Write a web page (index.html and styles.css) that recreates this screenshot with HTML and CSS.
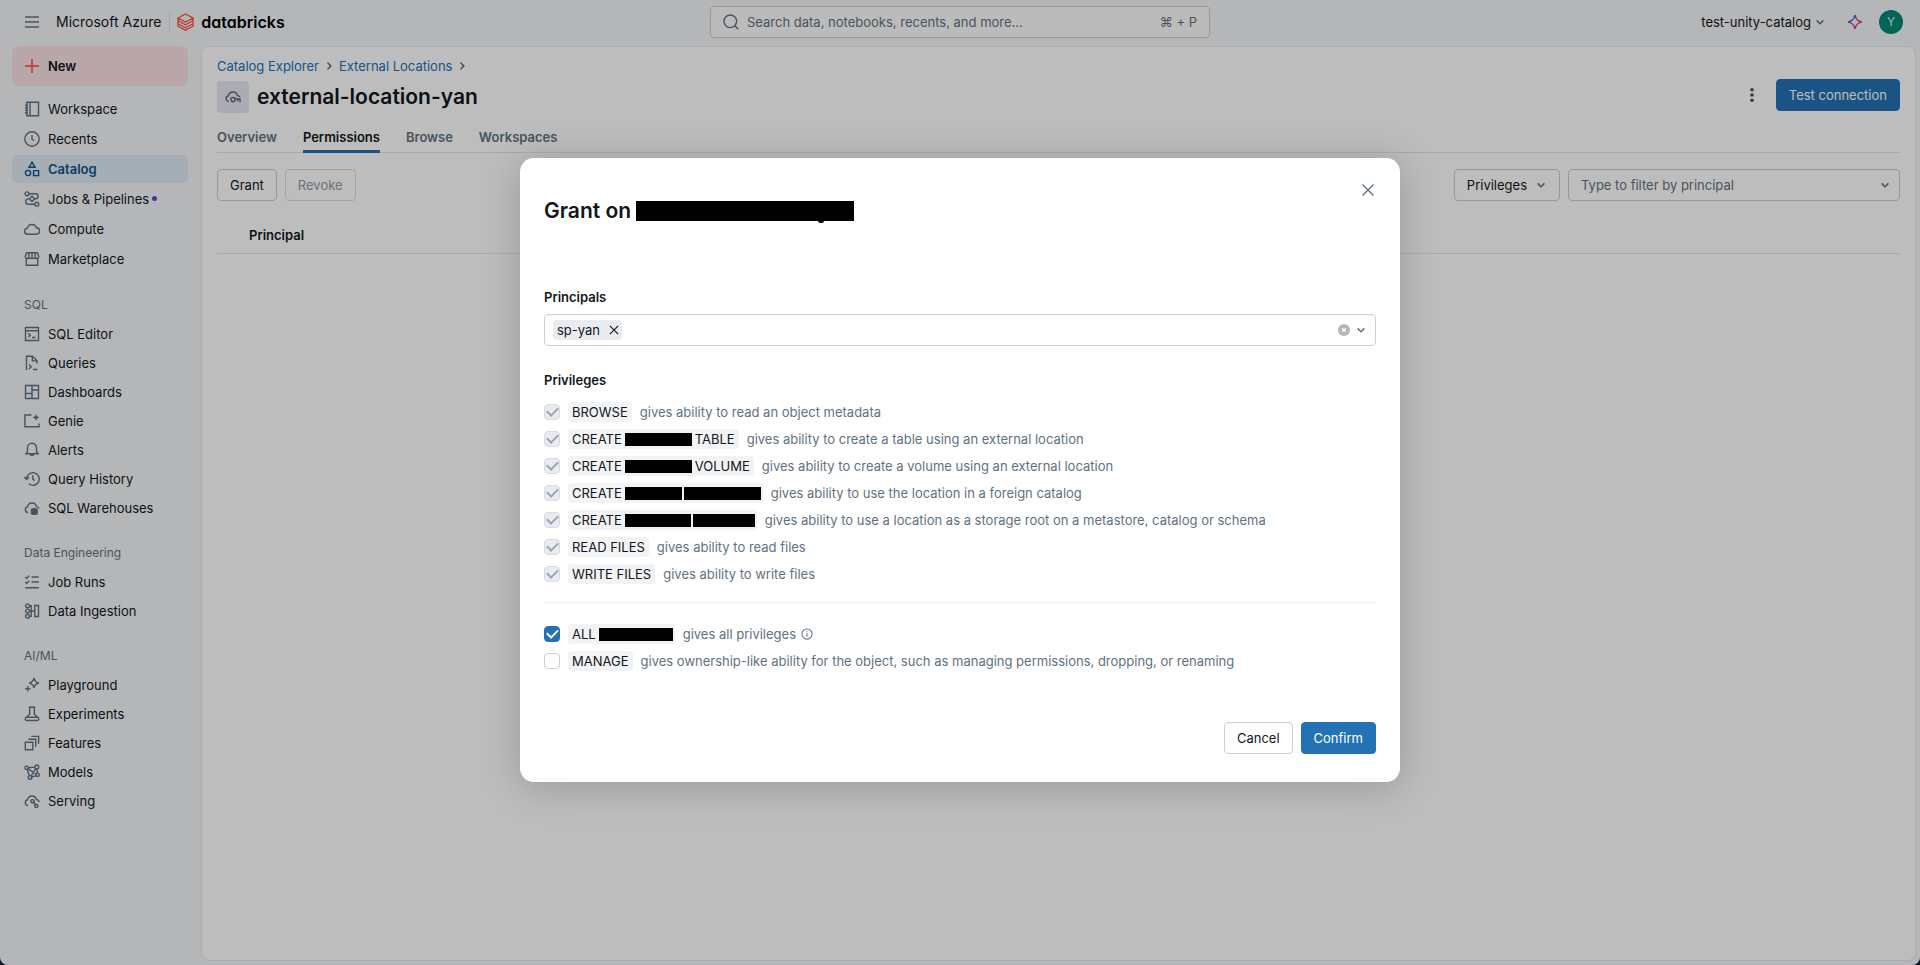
FILE: index.html
```html
<!DOCTYPE html>
<html lang="en">
<head>
<meta charset="utf-8">
<title>external-location-yan - Databricks</title>
<link rel="stylesheet" href="styles.css">
</head>
<body>
<svg class="defs" aria-hidden="true">
  <symbol id="i-menu" viewBox="0 0 16 16"><path d="M1 3h14M1 8h14M1 13h14"/></symbol>
  <symbol id="i-plus" viewBox="0 0 16 16"><path d="M8 1v14M1 8h14"/></symbol>
  <symbol id="i-workspace" viewBox="0 0 16 16"><path d="M2.8 1.3h11.7v13.4H2.8zM6 1.3v13.4M1 4.2h3M1 6.7h3M1 9.3h3M1 11.8h3"/></symbol>
  <symbol id="i-clock" viewBox="0 0 16 16"><circle cx="8" cy="8" r="7.2"/><path d="M8 4v4.3l2 1.2"/></symbol>
  <symbol id="i-catalog" viewBox="0 0 16 16"><path d="M8 1.2l3 5H5zM9.6 9.6h5v5h-5z"/><circle cx="4" cy="12" r="2.6"/></symbol>
  <symbol id="i-jobs" viewBox="0 0 16 16"><circle cx="3" cy="2.8" r="1.9"/><circle cx="12.8" cy="13.2" r="1.9"/><path d="M5 2.8h6.600a2.500 2.500 0 0 1 0 5H10.500M11 13.200H4.300a2.600 2.600 0 0 1 0-5.300H5.500M8 5.200l2.700 2.700L8 10.600 5.300 7.900z"/></symbol>
  <symbol id="i-cloud" viewBox="0 0 16 16"><path d="M3.800 13.200a3 3 0 0 1-.4-6 4.700 4.700 0 0 1 9.100-.4 3.200 3.200 0 0 1-.2 6.400z"/></symbol>
  <symbol id="i-market" viewBox="0 0 16 16"><path d="M2.500 1.800h11l1.200 3.700c0 2.700-3.500 2.700-3.500.3 0 2.400-3.200 2.400-3.200 0 0 2.400-3.200 2.400-3.200 0 0 2.400-3.500 2.400-3.500-.3zM5.200 1.800l-.4 4M8 1.800v4M10.800 1.800l.4 4M2.300 7.800v6.500h11.400V7.800"/></symbol>
  <symbol id="i-editor" viewBox="0 0 16 16"><path d="M1.500 1.500h13v13h-13zM1.500 4.700h13M4.300 7.300l2 1.900-2 1.900M8 11.500h3.500"/></symbol>
  <symbol id="i-queries" viewBox="0 0 16 16"><path d="M2.500 15V1.200h6l4.500 4.500v3M8.300 1.200v4.700H13M5 9.500l2.300 2.300L5 14.100M9 14.500h4.500"/></symbol>
  <symbol id="i-dash" viewBox="0 0 16 16"><path d="M1.500 1.500h13v13h-13zM8 1.500v13M1.500 9.500H8M8 6h6.500"/></symbol>
  <symbol id="i-genie" viewBox="0 0 16 16"><path d="M7.500 2H.9v11.800h14.200v-3.300"/><path class="solid" d="M12 .8c.4 2.200 1.200 3 3.500 3.600-2.300.6-3.100 1.400-3.500 3.600-.4-2.200-1.200-3-3.500-3.600C10.800 3.800 11.600 3 12 .8z"/></symbol>
  <symbol id="i-bell" viewBox="0 0 16 16"><path d="M3.500 9.500V5.700a4.500 4.500 0 0 1 9 0v3.800l1.600 2.300H1.900zM6.200 12.200a1.900 1.900 0 0 0 3.600 0"/></symbol>
  <symbol id="i-history" viewBox="0 0 16 16"><path d="M2.600 8a6.300 6.300 0 1 1 2.200 4.800M.3 6l2.300 2.400L5 6M8.800 4.300v4l2 1.200"/></symbol>
  <symbol id="i-warehouse" viewBox="0 0 16 16"><path d="M4 12.500a2.900 2.900 0 0 1-.5-5.700 4.600 4.600 0 0 1 9-.2 2.600 2.600 0 0 1 2.500 2"/><path class="solid" d="M6.800 9.600c0-2 7-2 7 0v4c0 2-7 2-7 0z"/></symbol>
  <symbol id="i-runs" viewBox="0 0 16 16"><path d="M1.200 3l1.500 1.400L5.200 1.600M1.200 8l1.500 1.400 2.500-2.800M7.500 3h7.300M7.500 8h7.300M1.200 13.800h13.600"/></symbol>
  <symbol id="i-ingest" viewBox="0 0 16 16"><circle cx="3.500" cy="2.800" r="1.900"/><circle cx="3.500" cy="8" r="1.900"/><circle cx="3.500" cy="13.200" r="1.900"/><path d="M5.400 2.800h1.800v10.400H5.400M5.400 8h5.400M10.800 2.500h3.700v11h-3.700z"/></symbol>
  <symbol id="i-play" viewBox="0 0 16 16"><path d="M10 1.200c.6 3 1.600 4 4.800 4.800-3.200.8-4.200 1.800-4.800 4.800C9.400 7.800 8.400 6.800 5.200 6 8.400 5.200 9.400 4.200 10 1.200zM3.800 9v5.400M1.100 11.700h5.400"/></symbol>
  <symbol id="i-flask" viewBox="0 0 16 16"><path d="M4.800 1.300h6.400M5.700 1.300v7l-4 3.500c-1 1.100-.4 2.700.9 2.700h10.800c1.300 0 1.900-1.600.9-2.700l-4-3.500v-7M2.600 11.300h10.800"/></symbol>
  <symbol id="i-features" viewBox="0 0 16 16"><path d="M1.300 7.200h7.500v7.500H1.300zM4.300 4.300h7.400v7.400M7.300 1.400h7.300v7.300"/></symbol>
  <symbol id="i-models" viewBox="0 0 16 16"><circle cx="2.600" cy="3.800" r="1.700"/><circle cx="12.800" cy="2.900" r="1.900"/><circle cx="13.600" cy="10.800" r="1.700"/><circle cx="6" cy="13.400" r="1.800"/><path d="M4.300 3.700l6.600-.6M3.200 5.400l2.200 6.300M11.800 4.500l-4.600 7.400M12.900 4.800l.5 4.300M4 4.800l8 5.200M7.800 13l4.300-1.400"/></symbol>
  <symbol id="i-serving" viewBox="0 0 16 16"><path d="M4 12.500a2.900 2.900 0 0 1-.5-5.700 4.600 4.600 0 0 1 9-.2 2.700 2.700 0 0 1 2.600 2.400M9 8.500l3.500 4"/><circle cx="8.500" cy="8.300" r="1.700"/><circle cx="12.300" cy="13" r="1.600"/></symbol>
  <symbol id="i-cloudkey" viewBox="0 0 16 16"><path d="M3.700 12.500a2.900 2.900 0 0 1-.3-5.700 4.600 4.600 0 0 1 9-.2A2.800 2.800 0 0 1 15 8"/><circle cx="8" cy="10.600" r="2.100"/><path d="M10.100 10h5v3.200M12.800 10v2.600"/></symbol>
  <symbol id="i-search" viewBox="0 0 16 16"><circle cx="7.300" cy="7.300" r="6.300"/><path d="M11.800 11.800l3.500 3.500"/></symbol>
  <symbol id="i-down" viewBox="0 0 16 16"><path d="M3.500 5.800L8 10.300l4.500-4.500"/></symbol>
  <symbol id="i-right" viewBox="0 0 16 16"><path d="M6 3.500L10.500 8 6 12.500"/></symbol>
  <symbol id="i-close" viewBox="0 0 16 16"><path d="M2.500 2.500l11 11M13.500 2.500l-11 11"/></symbol>
  <symbol id="i-info" viewBox="0 0 16 16"><circle cx="8" cy="8" r="6.800"/><path d="M8 7v4.500M8 4.300v1.500"/></symbol>
</svg>

<div class="window">
  <header class="topbar">
    <div class="brand">
      <button class="bare" aria-label="Toggle navigation"><svg class="icon"><use href="#i-menu"/></svg></button>
      <span class="cloud-name">Microsoft Azure</span>
      <a class="logo" href="#">
        <svg class="logo-mark" viewBox="0 0 17 18"><path d="M1 5l7.500-4L16 5 8.500 9zM1 5v2.700l7.500 4L16 7.700V5M1 7.700v3l7.500 4 7.500-4v-3M1 10.700v2.500l7.500 4 7.500-4v-2.500"/></svg>
        <span>databricks</span>
      </a>
    </div>
    <div class="search">
      <svg class="icon"><use href="#i-search"/></svg>
      <input type="text" aria-label="Search" placeholder="Search data, notebooks, recents, and more...">
      <span>⌘ + P</span>
    </div>
    <div class="account">
      <button class="bare metastore">test-unity-catalog<svg class="icon chevron"><use href="#i-down"/></svg></button>
      <button class="bare" aria-label="Assistant">
        <svg class="assistant" viewBox="0 0 16 16">
          <defs><linearGradient id="spark" x1="0" y1="0" x2="1" y2="1"><stop offset=".2" stop-color="#4a5fe8"/><stop offset=".5" stop-color="#b455c0"/><stop offset=".8" stop-color="#ff3b45"/></linearGradient></defs>
          <path stroke="url(#spark)" d="M8 1.200c1 4.300 2.500 5.800 6.800 6.800C10.500 9 9 10.500 8 14.800 7 10.500 5.500 9 1.200 8 5.500 7 7 5.500 8 1.200z"/>
        </svg>
      </button>
      <button class="avatar" aria-label="Account">Y</button>
    </div>
  </header>

  <div class="body">
    <nav class="sidebar" aria-label="Main">
      <button class="new"><svg class="icon"><use href="#i-plus"/></svg>New</button>
      <div class="nav-main">
        <a href="#"><svg class="icon"><use href="#i-workspace"/></svg>Workspace</a>
        <a href="#"><svg class="icon"><use href="#i-clock"/></svg>Recents</a>
        <a href="#" class="active" aria-current="page"><svg class="icon"><use href="#i-catalog"/></svg>Catalog</a>
        <a href="#"><svg class="icon"><use href="#i-jobs"/></svg>Jobs &amp; Pipelines<i class="dot"></i></a>
        <a href="#"><svg class="icon"><use href="#i-cloud"/></svg>Compute</a>
        <a href="#"><svg class="icon"><use href="#i-market"/></svg>Marketplace</a>
      </div>
      <section class="nav-group">
        <h2>SQL</h2>
        <a href="#"><svg class="icon"><use href="#i-editor"/></svg>SQL Editor</a>
        <a href="#"><svg class="icon"><use href="#i-queries"/></svg>Queries</a>
        <a href="#"><svg class="icon"><use href="#i-dash"/></svg>Dashboards</a>
        <a href="#"><svg class="icon"><use href="#i-genie"/></svg>Genie</a>
        <a href="#"><svg class="icon"><use href="#i-bell"/></svg>Alerts</a>
        <a href="#"><svg class="icon"><use href="#i-history"/></svg>Query History</a>
        <a href="#"><svg class="icon"><use href="#i-warehouse"/></svg>SQL Warehouses</a>
      </section>
      <section class="nav-group">
        <h2>Data Engineering</h2>
        <a href="#"><svg class="icon"><use href="#i-runs"/></svg>Job Runs</a>
        <a href="#"><svg class="icon"><use href="#i-ingest"/></svg>Data Ingestion</a>
      </section>
      <section class="nav-group">
        <h2>AI/ML</h2>
        <a href="#"><svg class="icon"><use href="#i-play"/></svg>Playground</a>
        <a href="#"><svg class="icon"><use href="#i-flask"/></svg>Experiments</a>
        <a href="#"><svg class="icon"><use href="#i-features"/></svg>Features</a>
        <a href="#"><svg class="icon"><use href="#i-models"/></svg>Models</a>
        <a href="#"><svg class="icon"><use href="#i-serving"/></svg>Serving</a>
      </section>
    </nav>

    <main class="panel">
      <div class="crumbs">
        <a href="#">Catalog Explorer</a><svg class="icon small"><use href="#i-right"/></svg>
        <a href="#">External Locations</a><svg class="icon small"><use href="#i-right"/></svg>
      </div>
      <div class="heading">
        <div class="heading-title">
          <span class="heading-icon"><svg class="icon"><use href="#i-cloudkey"/></svg></span>
          <h1>external-location-yan</h1>
        </div>
        <div class="heading-actions">
          <button class="bare more" aria-label="More actions"><svg viewBox="0 0 16 16"><circle cx="8" cy="2.700" r="1.800"/><circle cx="8" cy="8" r="1.800"/><circle cx="8" cy="13.300" r="1.800"/></svg></button>
          <button class="btn primary">Test connection</button>
        </div>
      </div>
      <div class="tabs" role="tablist">
        <button role="tab">Overview</button>
        <button role="tab" class="selected" aria-selected="true">Permissions</button>
        <button role="tab">Browse</button>
        <button role="tab">Workspaces</button>
      </div>
      <div class="toolbar">
        <button class="btn">Grant</button>
        <button class="btn" disabled>Revoke</button>
        <button class="btn menu">Privileges<svg class="icon chevron"><use href="#i-down"/></svg></button>
        <div class="combo filter">
          <input type="text" aria-label="Filter by principal" placeholder="Type to filter by principal">
          <svg class="icon chevron"><use href="#i-down"/></svg>
        </div>
      </div>
      <table class="grants"><thead><tr><th scope="col">Principal</th></tr></thead></table>
    </main>
  </div>

  <div class="overlay">
    <div class="modal" role="dialog" aria-modal="true" aria-labelledby="grant-title">
      <button class="bare close" aria-label="Close"><svg class="icon"><use href="#i-close"/></svg></button>
      <h2 id="grant-title">Grant on <span class="mask w-title"></span></h2>

      <label class="field-label" for="principals">Principals</label>
      <div class="combo principals">
        <span class="chip">sp-yan<button class="bare" aria-label="Remove sp-yan"><svg class="icon"><use href="#i-close"/></svg></button></span>
        <input type="text" id="principals">
        <button class="bare clear" aria-label="Clear"><svg viewBox="0 0 12 12"><circle cx="6" cy="6" r="6"/><path d="M4.200 4.200l3.600 3.600M7.800 4.200L4.200 7.800"/></svg></button>
        <svg class="icon chevron"><use href="#i-down"/></svg>
      </div>

      <h3 class="field-label">Privileges</h3>
      <div class="privileges">
        <label><input type="checkbox" checked disabled><span class="tag">BROWSE</span>gives ability to read an object metadata</label>
        <label><input type="checkbox" checked disabled><span class="tag">CREATE <span class="mask w-external"></span>TABLE</span>gives ability to create a table using an external location</label>
        <label><input type="checkbox" checked disabled><span class="tag">CREATE <span class="mask w-external"></span>VOLUME</span>gives ability to create a volume using an external location</label>
        <label><input type="checkbox" checked disabled><span class="tag ends-masked">CREATE <span class="mask w-foreign"></span><span class="mask w-securable"></span></span>gives ability to use the location in a foreign catalog</label>
        <label><input type="checkbox" checked disabled><span class="tag ends-masked">CREATE <span class="mask w-managed"></span><span class="mask w-storage"></span></span>gives ability to use a location as a storage root on a metastore, catalog or schema</label>
        <label><input type="checkbox" checked disabled><span class="tag">READ FILES</span>gives ability to read files</label>
        <label><input type="checkbox" checked disabled><span class="tag">WRITE FILES</span>gives ability to write files</label>
      </div>
      <div class="privileges broad">
        <label><input type="checkbox" checked><span class="tag ends-masked">ALL <span class="mask w-all"></span></span>gives all privileges<svg class="icon info"><use href="#i-info"/></svg></label>
        <label><input type="checkbox"><span class="tag">MANAGE</span>gives ownership-like ability for the object, such as managing permissions, dropping, or renaming</label>
      </div>

      <div class="actions">
        <button class="btn">Cancel</button>
        <button class="btn primary">Confirm</button>
      </div>
    </div>
  </div>
</div>
</body>
</html>
```

FILE: styles.css
```css
:root {
  --text: #11171c;
  --muted: #5f7281;
  --blue: #2272b4;
  --line: #e4e9ed;
  --control: #c6d0d5;
}

* { box-sizing: border-box; }

body {
  margin: 0;
  background: #101828;
  color: var(--text);
  font: 13px/20px Inter, "Liberation Sans", sans-serif;
}

button, input { font: inherit; color: inherit; }
h1, h2, h3 { margin: 0; }
a { color: inherit; text-decoration: none; }
input::placeholder { color: var(--muted); opacity: 1; }

.defs { display: none; }

.icon {
  width: 16px;
  height: 16px;
  flex: none;
  fill: none;
  stroke: currentColor;
  stroke-width: 1.4;
}
.icon.small { width: 12px; height: 12px; stroke-width: 1.7; }
.icon.chevron { width: 12px; height: 12px; stroke-width: 2; color: var(--muted); }
.solid { fill: currentColor; stroke: none; }

.bare {
  display: flex;
  align-items: center;
  padding: 0;
  border: 0;
  background: none;
}

.window {
  position: relative;
  display: flex;
  flex-direction: column;
  min-height: 100vh;
  overflow: hidden;
  border-radius: 0 0 8px 8px;
  background: #f3f6f9;
}

/* Top bar */
.topbar {
  display: grid;
  grid-template-columns: 1fr minmax(200px, 500px) 1fr;
  align-items: center;
  height: 46px;
  padding: 0 17px 2px;
}
.brand { display: flex; align-items: center; padding-left: 7px; }
.brand .icon { color: var(--muted); }
.cloud-name {
  margin-left: 16px;
  padding-right: 8px;
  border-right: 1px solid #dfe4e8;
  font-size: 14px;
}
.logo {
  display: flex;
  align-items: center;
  gap: 7px;
  margin-left: 7px;
  color: #000;
  font-size: 16px;
  font-weight: 600;
  font-feature-settings: "cv11";
}
.logo-mark { width: 17px; height: 18px; fill: none; stroke: #ff4b3e; stroke-width: 1.3; }
.search {
  display: flex;
  align-items: center;
  gap: 8px;
  height: 32px;
  padding: 0 12px;
  border: 1px solid var(--control);
  border-radius: 4px;
  background: #fcfdfd;
  color: var(--muted);
}
.search input, .combo input {
  flex: 1;
  min-width: 0;
  padding: 0;
  border: 0;
  outline: 0;
  background: none;
}
.account { display: flex; align-items: center; justify-content: flex-end; }
.metastore { gap: 3px; margin-right: 21px; }
.assistant { width: 16px; height: 16px; fill: none; stroke-width: 1.6; }
.avatar {
  width: 24px;
  height: 24px;
  margin-left: 16px;
  padding: 0;
  border: 0;
  border-radius: 50%;
  background: #008775;
  color: #e8f4f2;
  font-size: 12px;
}

/* Sidebar */
.body { display: flex; flex: 1; }
.sidebar { flex: none; width: 201px; padding: 0 13px 0 12px; }
.new {
  display: flex;
  align-items: center;
  gap: 8px;
  width: 100%;
  height: 40px;
  margin-bottom: 9px;
  padding: 0 12px;
  border: 0;
  border-radius: 8px;
  background: #f9e0e4;
  font-weight: 600;
}
.new .icon { color: #ff3b30; }
.sidebar a {
  display: flex;
  align-items: center;
  gap: 8px;
  height: 29px;
  padding: 0 12px;
  border-radius: 5px;
}
.sidebar a .icon { color: var(--muted); }
.nav-main { display: grid; gap: 2px; margin-bottom: 22px; }
.nav-main a { height: 28px; }
.sidebar .active { background: #dfeaf4; color: #0e538b; font-weight: 600; }
.sidebar .active .icon { color: #0e538b; }
.dot { width: 5px; height: 5px; margin: 0 0 2px -5px; border-radius: 50%; background: #6a3fc0; }
.nav-group { margin-bottom: 21px; }
.nav-group h2 {
  padding: 0 12px 4px;
  color: var(--muted);
  font-size: 12px;
  font-weight: 400;
}

/* Catalog page */
.panel {
  flex: 1;
  min-width: 0;
  margin: 0 4px 4px 0;
  padding: 9px 15px;
  border: 1px solid #e6eaed;
  border-radius: 8px;
  background: #fff;
}
.crumbs { display: flex; align-items: center; gap: 4px; color: var(--blue); }
.crumbs .icon { color: #44535f; }
.heading { display: flex; justify-content: space-between; margin-top: 3px; }
.heading-title { display: flex; align-items: center; gap: 8px; padding-top: 2px; }
.heading-actions { display: flex; align-items: flex-start; gap: 16px; }
.heading-icon {
  display: grid;
  place-items: center;
  width: 32px;
  height: 32px;
  border-radius: 4px;
  background: #e4e9ee;
  color: #5b6b79;
}
h1, .modal h2 { font-size: 21px; line-height: 28px; font-weight: 600; }
.more { height: 32px; }
.more svg { width: 16px; height: 16px; fill: #445461; }

.btn {
  display: flex;
  align-items: center;
  justify-content: center;
  height: 32px;
  padding: 0 12px;
  border: 1px solid var(--control);
  border-radius: 4px;
  background: #fff;
}
.btn:disabled { border-color: #d8dee2; color: #8f9ba5; }
.primary { border-color: var(--blue); background: var(--blue); color: #fff; }

.tabs { display: flex; gap: 26px; margin-top: 11px; border-bottom: 1px solid var(--line); }
.tabs button {
  height: 29px;
  margin-bottom: -1px;
  padding: 0 0 1px;
  border: 0;
  border-bottom: 3px solid transparent;
  background: none;
  color: var(--muted);
  font-weight: 600;
}
.tabs .selected { border-color: var(--blue); color: var(--text); }

.toolbar { display: flex; gap: 8px; margin-top: 16px; }
.toolbar .menu { gap: 8px; margin-left: auto; }
.combo {
  display: flex;
  align-items: center;
  height: 32px;
  padding: 0 8px 0 12px;
  border: 1px solid var(--control);
  border-radius: 4px;
  background: #fff;
}
.filter { width: 332px; }

.grants { width: 100%; margin-top: 16px; border-collapse: collapse; }
.grants th {
  height: 36px;
  padding: 0 32px;
  border-bottom: 1px solid var(--line);
  text-align: left;
  font-weight: 600;
}

/* Grant dialog */
.overlay {
  position: absolute;
  inset: 0;
  display: flex;
  justify-content: center;
  align-items: flex-start;
  padding-top: 158px;
  background: rgba(0, 0, 0, .26);
}
.modal {
  position: relative;
  width: 880px;
  max-width: 100%;
  padding: 39px 24px 28px;
  border-radius: 14px;
  background: #fff;
  box-shadow: 0 4px 40px rgba(0, 0, 0, .2);
}
.close { position: absolute; top: 24px; right: 24px; color: var(--muted); }
.modal h2 { display: flex; align-items: center; gap: 5px; margin-bottom: 62px; }
.field-label { display: block; font-size: 13px; line-height: 20px; font-weight: 600; }
.principals { margin: 7px 0 24px; padding-left: 8px; }
.chip {
  display: flex;
  align-items: center;
  gap: 8px;
  padding: 0 2px 0 4px;
  border-radius: 4px;
  background: #e8ecf0;
}
.chip .icon { width: 12px; height: 12px; stroke-width: 1.6; }
.clear { margin-right: 5px; }
.clear svg { width: 12px; height: 12px; fill: #b5b5b5; stroke: #fff; stroke-width: 1.3; }
.clear circle { stroke: none; }

.privileges { display: grid; gap: 7px; margin-top: 12px; padding-bottom: 18px; color: var(--muted); }
.privileges label { display: flex; align-items: center; gap: 8px; }
.privileges input {
  appearance: none;
  display: grid;
  place-items: center;
  width: 16px;
  height: 16px;
  margin: 0;
  border: 1px solid var(--control);
  border-radius: 4px;
  background: #fff;
}
.privileges input:checked { border-color: var(--blue); background: var(--blue); }
.privileges input:checked::before {
  content: "";
  width: 9px;
  height: 5px;
  margin-bottom: 3px;
  border: solid #fff;
  border-width: 0 0 2px 2px;
  transform: rotate(-45deg);
}
.privileges input:disabled { border-color: #d5dbe0; background: #e8ecf0; }
.privileges input:disabled::before { border-color: #9aa3ab; }
.tag {
  display: flex;
  align-items: center;
  gap: 3px;
  padding: 0 4px;
  border-radius: 4px;
  background: #f1f3f4;
  color: var(--text);
}
.ends-masked { gap: 2px; padding-right: 2px; }
.ends-masked .mask:first-child { margin-left: 1px; }
.mask { height: 13px; background: #000; }
.w-title { position: relative; width: 218px; height: 20px; }
.w-title::after {
  content: "";
  position: absolute;
  top: 100%;
  right: 30px;
  width: 6px;
  height: 2px;
  border-radius: 0 0 3px 3px;
  background: #11171c;
}
.w-external { width: 67px; }
.w-foreign { width: 57px; }
.w-securable { width: 77px; }
.w-managed { width: 66px; }
.w-storage { width: 62px; }
.w-all { width: 74px; }
.info { width: 12px; height: 12px; margin-left: -3px; }
.broad { margin-top: 0; padding: 21px 0 0; border-top: 1px solid #eef0f2; }
.actions { display: flex; justify-content: flex-end; gap: 8px; margin-top: 51px; }
```
